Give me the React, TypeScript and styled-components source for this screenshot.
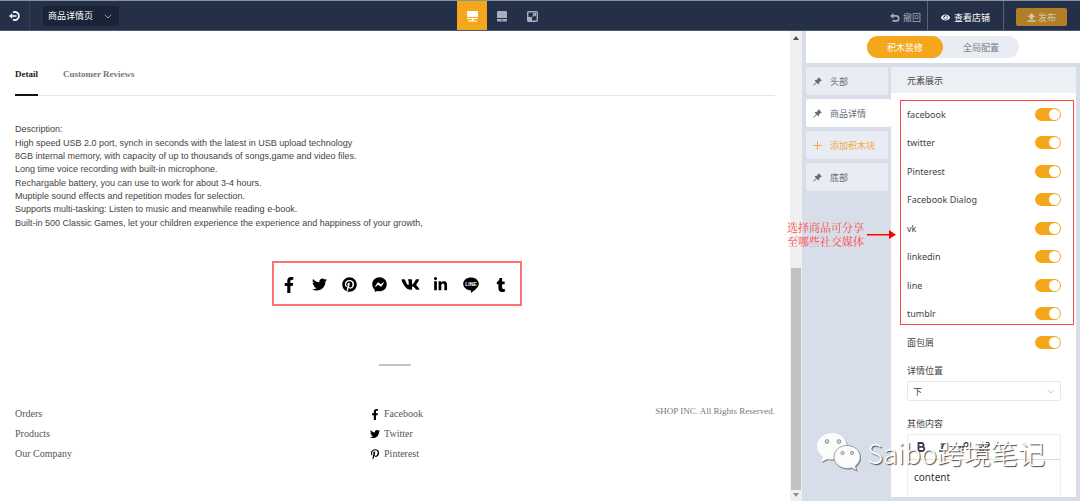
import React from "react";
import styled, { createGlobalStyle } from "styled-components";
import {
  FaEye,
  FaFacebookF,
  FaFacebookMessenger,
  FaLinkedinIn,
  FaPinterest,
  FaPinterestP,
  FaTumblr,
  FaTwitter,
  FaVk,
} from "react-icons/fa";

const ui = `"Noto Sans", "Noto Sans CJK SC", sans-serif`;
const uiCjk = `"Noto Sans CJK SC", "Noto Sans", sans-serif`;
const serif = `"Liberation Serif", serif`;
const amber = "#f5a71b";
const mark = "#ff4242";

const GlobalStyle = createGlobalStyle`
  * { box-sizing: border-box; }
  body { margin: 0; background: #d8dee9; font-family: ${ui}; font-size: 9px; }
  ul { margin: 0; padding: 0; list-style: none; }
  button, select, input { font: inherit; margin: 0; }
  button { border: 0; padding: 0; background: none; cursor: pointer; }
  a { color: inherit; text-decoration: none; }
`;

const Shell = styled.div`
  position: relative;
  display: flex;
  flex-direction: column;
  height: 100vh;
  overflow: hidden;
`;

/* ---------- top bar ---------- */

const TopBar = styled.header`
  display: flex;
  flex: none;
  justify-content: space-between;
  height: 31px;
  border-top: 1px solid #8a94a1;
  border-bottom: 1px solid #4d566a;
  background: #243048;
  color: #fff;
  font-family: ${uiCjk};
`;

const BarGroup = styled.div`
  display: flex;
  align-items: center;
`;

const ExitButton = styled.button`
  display: grid;
  place-items: center;
  width: 30px;
  height: 29px;
  border-right: 1px solid #35415a;
  color: #fff;
`;

const PageSelectBox = styled.label`
  position: relative;
  display: flex;
  align-items: center;
  margin: 0 2px 0 13px;
`;

const PageSelect = styled.select`
  appearance: none;
  width: 76px;
  height: 20px;
  padding: 0 20px 0 5px;
  border: 0;
  border-radius: 2px;
  background: #1b2336;
  color: #fff;
`;

const SelectArrow = styled.svg<{ $right: number }>`
  position: absolute;
  top: 50%;
  right: ${(p) => p.$right}px;
  margin-top: -2px;
  pointer-events: none;
`;

const DeviceButton = styled.button<{ $active?: boolean }>`
  display: grid;
  place-items: center;
  width: 30px;
  height: 29px;
  padding-top: 1px;
  background: ${(p) => (p.$active ? amber : "transparent")};
  color: ${(p) => (p.$active ? "#fff" : "#a9afba")};
`;

const BarAction = styled.button<{ $muted?: boolean }>`
  display: flex;
  align-items: center;
  justify-content: center;
  gap: 3px;
  height: 29px;
  padding: 3px 6px 0;
  border-right: 1px solid #57617a;
  color: ${(p) => (p.$muted ? "#a3a9b5" : "#fff")};

  & + & {
    gap: 4px;
    padding: 3px 13px 0;
  }
`;

const PublishButton = styled.button`
  display: flex;
  align-items: center;
  justify-content: center;
  gap: 2px;
  width: 51px;
  height: 18px;
  margin: 3px 13px 0 12px;
  border-radius: 2px;
  background: #b27f26;
  color: #cfc6b5;
`;

/* ---------- workspace ---------- */

const Workspace = styled.div`
  display: flex;
  flex: 1;
  min-height: 0;
`;

const Preview = styled.main`
  flex: 1;
  min-width: 0;
  padding: 0 15px;
  background: #fff;
  font-family: ${serif};
  font-size: 10px;
  color: #555;
`;

const ScrollTrack = styled.div`
  display: flex;
  flex: none;
  flex-direction: column;
  align-items: center;
  width: 12px;
  padding: 4px 0 3px;
  background: #f0f0f0;
`;

const ScrollThumb = styled.div`
  flex: 0 1 222px;
  width: 10px;
  margin: auto 0 2px;
  background: #c1c1c1;
`;

const ScrollArrow = styled.svg`
  flex: none;
`;

const Tabs = styled.div`
  display: flex;
  gap: 25px;
  height: 65px;
  border-bottom: 1px solid #e6e6e6;
`;

const Tab = styled.button<{ $active?: boolean }>`
  margin-bottom: -1px;
  padding-top: 22px;
  border-bottom: 2px solid ${(p) => (p.$active ? "#111" : "transparent")};
  color: ${(p) => (p.$active ? "#222" : "#777")};
  font-size: 9px;
  font-weight: 700;
`;

const Description = styled.section`
  display: flex;
  flex-direction: column;
  gap: 1px;
  margin-top: 27px;
  color: #444;
  font-family: "Liberation Sans", sans-serif;
  font-size: 9px;
  line-height: 13px;
`;

const ShareRow = styled.section`
  display: flex;
  justify-content: center;
  margin-top: 31px;
  padding-left: 4px;
`;

const ShareList = styled.ul`
  display: grid;
  grid-template-columns: repeat(8, 1fr);
  align-items: center;
  width: 250px;
  height: 45px;
  padding: 2px 4px 0 0;
  border: 2px solid #ff7272;
  color: #000;

  a { display: grid; place-items: center; }
`;

const ShortRule = styled.hr`
  width: 32px;
  height: 2px;
  margin: 58px auto 0;
  border: 0;
  background: #c4c4c4;
`;

const Footer = styled.footer`
  display: grid;
  grid-template-columns: 1fr auto 1fr;
  margin-top: 38px;
  line-height: 20px;
`;

const FooterColumn = styled.div<{ $indent?: boolean }>`
  padding-left: ${(p) => (p.$indent ? 3 : 0)}px;
`;

const FooterLink = styled.a`
  display: flex;
  align-items: center;
  gap: 4px;
  height: 20px;
  color: #555;

  svg { width: 10px; color: #000; }
`;

const Copyright = styled.p`
  margin: -3px 0 0;
  color: #777;
  font-size: 9px;
  text-align: right;
`;

/* ---------- settings ---------- */

const Settings = styled.aside`
  display: flex;
  flex: none;
  flex-direction: column;
  width: 278px;
  padding-left: 4px;
`;

const ModeBar = styled.div`
  display: flex;
  justify-content: center;
  padding: 5px 0;
  background: #fff;
  font-family: ${uiCjk};
`;

const ModeSwitch = styled.div`
  display: flex;
  width: 152px;
  border-radius: 11px;
  background: #e9ecf2;
`;

const ModeButton = styled.button<{ $active?: boolean }>`
  flex: 1;
  height: 22px;
  padding-top: 1px;
  border-radius: 11px;
  background: ${(p) => (p.$active ? amber : "transparent")};
  color: ${(p) => (p.$active ? "#fff" : "#777e8a")};
`;

const SettingsBody = styled.div`
  display: flex;
  flex: 1;
  min-height: 0;
  padding: 4px 4px 4px 0;
`;

const BlockNav = styled.nav`
  display: flex;
  flex: none;
  flex-direction: column;
  gap: 4px;
  width: 85px;
`;

const BlockButton = styled.button<{ $kind?: "active" | "add" }>`
  display: flex;
  align-items: center;
  gap: 8px;
  width: ${(p) => (p.$kind === "active" ? 85 : 82)}px;
  height: 28px;
  padding: 0 0 0 7px;
  border-radius: 2px;
  background: ${(p) => (p.$kind === "active" ? "#fff" : "#e9ecf2")};
  color: ${(p) => (p.$kind === "add" ? "#f3a840" : "#656d7a")};
  font-family: ${uiCjk};
`;

const Panel = styled.section`
  flex: 1;
  min-width: 0;
  overflow: hidden;
  background: #fff;
  color: #444;
`;

const PanelTitle = styled.h2`
  margin: 0;
  padding: 1px 16px 0;
  background: #eceff4;
  font: 400 9px/25px ${uiCjk};
`;

const SwitchGroup = styled.div`
  margin: 7px 2px 0 9px;
  padding: 3px 12px 1px 6px;
  border: 1px solid ${mark};
`;

const SwitchRow = styled.label`
  display: flex;
  align-items: center;
  justify-content: space-between;
  height: 20px;

  & + & { margin-top: 8px; }
  & + &:nth-child(odd) { margin-top: 9px; }
`;

const Switch = styled.input`
  appearance: none;
  position: relative;
  width: 26px;
  height: 13px;
  border-radius: 7px;
  background: #c9ced8;
  cursor: pointer;

  &::after {
    content: "";
    position: absolute;
    top: 1px;
    left: 1px;
    width: 11px;
    height: 11px;
    border-radius: 50%;
    background: #fff;
  }
  &:checked { background: ${amber}; }
  &:checked::after { left: 14px; }
`;

const Fields = styled.div`
  display: flex;
  flex-direction: column;
  padding: 7px 15px 0 16px;
  font-family: ${uiCjk};
`;

const FieldLabel = styled.label`
  margin-top: 9px;
  line-height: 20px;
`;

const FieldSelectBox = styled.div`
  position: relative;
  margin-bottom: 4px;
`;

const FieldSelect = styled.select`
  display: block;
  appearance: none;
  width: 100%;
  height: 20px;
  padding: 0 5px;
  border: 1px solid #e6e8ec;
  border-radius: 2px;
  background: #fff;
  color: #444;
`;

const Editor = styled.div`
  border: 1px solid #eceef1;
`;

const EditorTools = styled.div`
  display: flex;
  align-items: center;
  gap: 9px;
  height: 25px;
  padding-left: 7px;
  border-bottom: 1px solid #dcdcdc;
`;

const ToolButton = styled.button`
  display: grid;
  place-items: center;
  width: 12px;
  height: 16px;
  color: #333f4d;
`;

const EditorText = styled.textarea`
  display: block;
  width: 100%;
  height: 60px;
  padding: 10px 6px;
  border: 0;
  resize: none;
  color: #333;
  font: 10px/14px ${ui};
`;

/* ---------- overlays ---------- */

const Note = styled.div`
  position: absolute;
  top: 220px;
  right: 184px;
  display: flex;
  align-items: center;
  gap: 3px;
  color: ${mark};
  font: 11px/14px "Noto Serif CJK SC", "Noto Sans CJK SC", serif;
`;

const Watermark = styled.div`
  position: absolute;
  right: 35px;
  bottom: 28px;
  display: flex;
  align-items: center;
  gap: 4px;
  color: #fff;
  font: 300 27px/40px "Noto Sans CJK SC", sans-serif;
  text-shadow: 1px 1px 1px #444;
  white-space: nowrap;
  pointer-events: none;
`;

const Chevron = ({ color, right }: { color: string; right: number }) => (
  <SelectArrow $right={right} width="8" height="5" viewBox="0 0 8 5" fill="none" stroke={color}>
    <path d="M1 .8 4 4 7 .8" />
  </SelectArrow>
);

const PinIcon = () => (
  <svg width="9" height="9" viewBox="0 0 9 9" fill="currentColor">
    <path d="M5.600.2 8.800 3.400 8.200 4 7.600 3.900 6.100 5.400C6.300 6.200 6.100 7 5.600 7.500L3.900 5.800.700 8.700.300 8.300 3.200 5.100 1.500 3.400C2 2.900 2.800 2.700 3.600 2.900L5.100 1.400 5 .8z" />
  </svg>
);

const LineIcon = () => (
  <svg width="16" height="16" viewBox="0 0 16 16">
    <path d="M8 .5c4.300 0 7.800 2.700 7.800 6.300 0 3.200-3.500 6-7.200 8.800-.6.400-.7.100-.6-.5l.1-1.700C3.600 13.300.2 10.400.2 6.800.2 3.200 3.700.5 8 .5z" />
    <text x="8" y="8.700" textAnchor="middle" fill="#fff" fontSize="5" fontWeight="700" fontFamily="Liberation Sans">LINE</text>
  </svg>
);

const shares = [
  { name: "facebook", icon: <FaFacebookF size={16} /> },
  { name: "twitter", icon: <FaTwitter size={15} /> },
  { name: "Pinterest", icon: <FaPinterest size={15} /> },
  { name: "Facebook Dialog", icon: <FaFacebookMessenger size={15} /> },
  { name: "vk", icon: <FaVk size={19} /> },
  { name: "linkedin", icon: <FaLinkedinIn size={15} /> },
  { name: "line", icon: <LineIcon /> },
  { name: "tumblr", icon: <FaTumblr size={14} /> },
];

const paragraphs = [
  ["Description:"],
  [
    "High speed USB 2.0 port, synch in seconds with the latest in USB upload technology",
    "8GB internal memory, with capacity of up to thousands of songs,game and video files.",
    "Long time voice recording with built-in microphone.",
  ],
  [
    "Rechargable battery, you can use to work for about 3-4 hours.",
    "Muptiple sound effects and repetition modes for selection.",
    "Supports multi-tasking: Listen to music and meanwhile reading e-book.",
  ],
  ["Built-in 500 Classic Games, let your children experience the experience and happiness of your growth,"],
];

export default function App() {
  return (
    <Shell>
      <GlobalStyle />
      <TopBar>
        <BarGroup>
          <ExitButton aria-label="退出">
            <svg width="11" height="10" viewBox="0 0 11 10" fill="none" stroke="currentColor" strokeWidth="1.700">
              <path d="M4 1.500A4 4 0 1 1 4 8.500M7.500 5H2" />
              <path d="M3.200 2.200V7.800L0 5z" fill="currentColor" stroke="none" />
            </svg>
          </ExitButton>
          <PageSelectBox>
            <PageSelect aria-label="页面">
              <option>商品详情页</option>
            </PageSelect>
            <Chevron color="#98a0ae" right={7} />
          </PageSelectBox>
        </BarGroup>
        <BarGroup>
          <DeviceButton $active aria-label="桌面">
            <svg width="11" height="11" viewBox="0 0 11 11" fill="currentColor">
              <path d="M1 0h9a1 1 0 0 1 1 1v5H0V1a1 1 0 0 1 1-1zM0 7h11v1H6.500v1.500H10v1H1v-1h3.500V8H0z" />
            </svg>
          </DeviceButton>
          <DeviceButton aria-label="平板">
            <svg width="10" height="11" viewBox="0 0 10 11" fill="currentColor">
              <path d="M1 0h8a1 1 0 0 1 1 1v6H0V1a1 1 0 0 1 1-1zM0 8h10v1.500a1 1 0 0 1-1 1H1a1 1 0 0 1-1-1zM4.300 8.700v1h1.400v-1z" fillRule="evenodd" />
            </svg>
          </DeviceButton>
          <DeviceButton aria-label="全屏">
            <svg width="11" height="11" viewBox="0 0 11 11" fill="none" stroke="currentColor">
              <rect x=".7" y=".7" width="9.600" height="9.600" rx="1" strokeWidth="1.400" />
              <path d="M5.500 5.500 8 3" strokeWidth="1.200" />
              <path d="M5.300 2H9v3.700zM1 6h4v4H1z" fill="currentColor" stroke="none" />
            </svg>
          </DeviceButton>
        </BarGroup>
        <BarGroup>
          <BarAction $muted>
            <svg width="10" height="9" viewBox="0 0 10 9" fill="none" stroke="currentColor" strokeWidth="1.700">
              <path d="M2 2.900h4.200a2.500 2.500 0 0 1 0 5H2.500" />
              <path d="M3.500 0v5.800L0 2.900z" fill="currentColor" stroke="none" />
            </svg>
            撤回
          </BarAction>
          <BarAction>
            <FaEye size={9} />
            查看店铺
          </BarAction>
          <PublishButton>
            <svg width="9" height="9" viewBox="0 0 9 9" fill="currentColor">
              <path d="M4.500 0 8.300 4H6v2.500H3V4H.7zM.5 7.200h8v1.600h-8z" />
            </svg>
            发布
          </PublishButton>
        </BarGroup>
      </TopBar>

      <Workspace>
        <Preview>
          <Tabs>
            <Tab $active>Detail</Tab>
            <Tab>Customer Reviews</Tab>
          </Tabs>
          <Description>
            {paragraphs.map((lines) => (
              <div key={lines[0]}>
                {lines.map((line) => (
                  <div key={line}>{line}</div>
                ))}
              </div>
            ))}
          </Description>
          <ShareRow>
            <ShareList>
              {shares.map((s) => (
                <li key={s.name}>
                  <a href="#share" aria-label={s.name}>{s.icon}</a>
                </li>
              ))}
            </ShareList>
          </ShareRow>
          <ShortRule />
          <Footer>
            <FooterColumn>
              <FooterLink href="#orders">Orders</FooterLink>
              <FooterLink href="#products">Products</FooterLink>
              <FooterLink href="#company">Our Company</FooterLink>
            </FooterColumn>
            <FooterColumn $indent>
              <FooterLink href="#facebook"><FaFacebookF size={11} />Facebook</FooterLink>
              <FooterLink href="#twitter"><FaTwitter size={10} />Twitter</FooterLink>
              <FooterLink href="#pinterest"><FaPinterestP size={11} />Pinterest</FooterLink>
            </FooterColumn>
            <Copyright>SHOP INC. All Rights Reserved.</Copyright>
          </Footer>
        </Preview>

        <ScrollTrack aria-hidden="true">
          <ScrollArrow width="6" height="6" viewBox="0 0 6 6"><path d="M3 1 6 5H0z" fill="#505050" /></ScrollArrow>
          <ScrollThumb />
          <ScrollArrow width="6" height="6" viewBox="0 0 6 6"><path d="M3 5 6 1H0z" fill="#909090" /></ScrollArrow>
        </ScrollTrack>

        <Settings>
          <ModeBar>
            <ModeSwitch>
              <ModeButton $active>积木装修</ModeButton>
              <ModeButton>全局配置</ModeButton>
            </ModeSwitch>
          </ModeBar>
          <SettingsBody>
            <BlockNav>
              <BlockButton><PinIcon />头部</BlockButton>
              <BlockButton $kind="active"><PinIcon />商品详情</BlockButton>
              <BlockButton $kind="add">
                <svg width="9" height="9" viewBox="0 0 9 9" stroke="currentColor"><path d="M4.500 0v9M0 4.500h9" /></svg>
                添加积木块
              </BlockButton>
              <BlockButton><PinIcon />底部</BlockButton>
            </BlockNav>
            <Panel>
              <PanelTitle>元素展示</PanelTitle>
              <SwitchGroup>
                {shares.map((s) => (
                  <SwitchRow key={s.name}>
                    {s.name}
                    <Switch type="checkbox" role="switch" defaultChecked />
                  </SwitchRow>
                ))}
              </SwitchGroup>
              <Fields>
                <SwitchRow>
                  面包屑
                  <Switch type="checkbox" role="switch" defaultChecked />
                </SwitchRow>
                <FieldLabel htmlFor="position">详情位置</FieldLabel>
                <FieldSelectBox>
                  <FieldSelect id="position">
                    <option>下</option>
                  </FieldSelect>
                  <Chevron color="#c0c4cc" right={6} />
                </FieldSelectBox>
                <FieldLabel htmlFor="other">其他内容</FieldLabel>
                <Editor>
                  <EditorTools>
                    <ToolButton aria-label="粗体">
                      <svg width="9" height="10" viewBox="0 0 9 10" fill="none" stroke="currentColor" strokeWidth="1.800">
                        <path d="M1.500 1h3.200a1.900 1.900 0 0 1 0 3.800H1.500zM1.500 4.800h3.700a2.100 2.100 0 0 1 0 4.200H1.500z" />
                      </svg>
                    </ToolButton>
                    <ToolButton aria-label="斜体">
                      <svg width="9" height="10" viewBox="0 0 9 10" fill="none" stroke="currentColor" strokeWidth="1.400">
                        <path d="M3 1h5M1 9h5M5.500 1 3.500 9" />
                      </svg>
                    </ToolButton>
                    <ToolButton aria-label="链接">
                      <svg width="11" height="10" viewBox="0 0 11 10" fill="none" stroke="currentColor" strokeWidth="1.300">
                        <path d="M4.500 6 7 3.500M5.500 2.500 7 1.200a1.800 1.800 0 0 1 2.600 2.600L8 5.300M5.500 7 4 8.600A1.800 1.800 0 0 1 1.400 6L3 4.500" />
                      </svg>
                    </ToolButton>
                    <ToolButton aria-label="取消链接">
                      <svg width="11" height="10" viewBox="0 0 11 10" fill="none" stroke="currentColor" strokeWidth="1.300">
                        <path d="M5.500 2.500 7 1.200a1.800 1.800 0 0 1 2.600 2.600L8 5.300M5.500 7 4 8.600A1.800 1.800 0 0 1 1.400 6L3 4.500M2 1l7 8" />
                      </svg>
                    </ToolButton>
                  </EditorTools>
                  <EditorText id="other" defaultValue="content" />
                </Editor>
              </Fields>
            </Panel>
          </SettingsBody>
        </Settings>
      </Workspace>

      <Note>
        <span>
          选择商品可分享
          <br />
          至哪些社交媒体
        </span>
        <svg width="29" height="9" viewBox="0 0 29 9">
          <path d="M0 4h23v1.500H0zM22 0l7 4.700L22 9z" fill="#f00" />
        </svg>
      </Note>

      <Watermark>
        <svg width="46" height="40" viewBox="0 0 46 40">
          <g fill="#777" transform="translate(.8 1)">
            <path d="M15 0C6.500 0 0 5.900 0 13.500c0 4.300 2.200 8 5.600 10.500L4.500 29l6-3c1.400.4 3 .6 4.500.6 8.500 0 15-5.900 15-13.100S23.500 0 15 0z" />
            <path d="M30 12.500c-7.300 0-13 5-13 11.500s5.700 11.500 13 11.500c1.600 0 3-.2 4.400-.6l5.400 2.900-1.400-4.800c3-2.100 4.900-5.300 4.900-9 0-6.500-6-11.500-13.300-11.500z" />
          </g>
          <path fill="#fcfcfd" d="M15 0C6.500 0 0 5.900 0 13.500c0 4.300 2.200 8 5.600 10.500L4.500 29l6-3c1.400.4 3 .6 4.500.6 8.500 0 15-5.900 15-13.100S23.500 0 15 0z" />
          <path fill="#fcfcfd" stroke="#888" strokeWidth=".8" d="M30 12.500c-7.300 0-13 5-13 11.500s5.700 11.500 13 11.500c1.600 0 3-.2 4.400-.6l5.400 2.900-1.400-4.800c3-2.100 4.900-5.300 4.900-9 0-6.500-6-11.500-13.300-11.500z" />
          <g fill="#d4d7dc" stroke="#777" strokeWidth=".7">
            <circle cx="10" cy="8.500" r="1.900" />
            <circle cx="22" cy="8.500" r="1.900" />
            <circle cx="25.500" cy="20" r="1.600" />
            <circle cx="35" cy="20" r="1.600" />
          </g>
        </svg>
        Saibo跨境笔记
      </Watermark>
    </Shell>
  );
}
